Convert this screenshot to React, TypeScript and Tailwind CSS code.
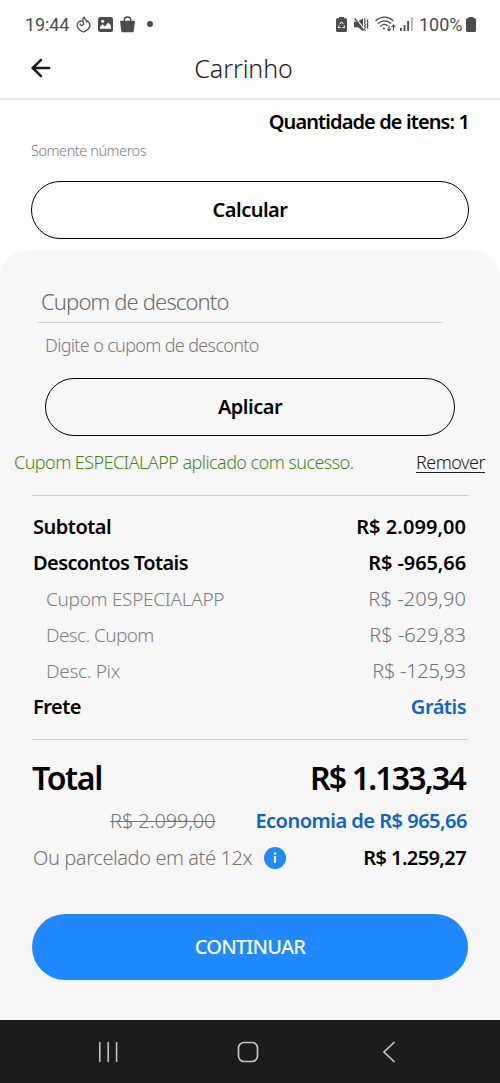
import { ArrowLeft } from 'lucide-react';

interface SummaryItem {
    label: string;
    value: string;
    labelClass: string;
    valueClass: string;
}

const strong = 'text-black font-semibold text-[20px]';
const light = 'text-[#808080] font-[350] text-[19px] pl-[13px]';
const lightValue = 'text-[#757575] font-[350] text-[20px]';

const summary: SummaryItem[] = [
    { label: 'Subtotal', value: 'R$ 2.099,00', labelClass: `${strong} tracking-[-0.5px]`, valueClass: `${strong} tracking-[0.05px]` },
    { label: 'Descontos Totais', value: 'R$ -965,66', labelClass: `${strong} tracking-[-0.6px]`, valueClass: `${strong} tracking-[-0.1px]` },
    { label: 'Cupom ESPECIALAPP', value: 'R$ -209,90', labelClass: `${light} tracking-[-0.3px]`, valueClass: `${lightValue} tracking-[0.1px]` },
    { label: 'Desc. Cupom', value: 'R$ -629,83', labelClass: `${light} tracking-[-0.6px]`, valueClass: `${lightValue} tracking-[0px]` },
    { label: 'Desc. Pix', value: 'R$ -125,93', labelClass: `${light} tracking-[-0.3px]`, valueClass: `${lightValue} tracking-[-0.3px]` },
    { label: 'Frete', value: 'Grátis', labelClass: `${strong} tracking-[-0.5px]`, valueClass: 'text-[#0e62d0] font-semibold text-[20px] tracking-[-0.5px]' },
];

function StatusBar() {
    return (
        <div className="flex h-10 items-center justify-between pt-2 pr-6 pl-[25px] font-['Roboto',sans-serif] text-[18px] text-[#4c4c4c]">
            <div className="flex items-center">
                <span className="w-[45px] whitespace-nowrap tracking-[-0.1px]">19:44</span>
                <svg className="ml-[6px]" width="15" height="17" viewBox="0 0 15 17" fill="none" stroke="#4c4c4c" strokeWidth="1.3" strokeLinecap="round" strokeLinejoin="round">
                    <path d="M6.9 4.4C6.4 2.8 7.2 1.7 8.2 1c-.1 1.4.9 2 1.7 3 .5.7.8 1.2.7 1.9l1.1-.9c1.500 1.300 2.300 3 2.200 4.600C13.700 12.800 10.500 14.700 7.500 16 4 14.700 1.100 12.400 1.100 9.300 1.100 6.500 3.400 4.800 5.700 5.200c2 .4 2.500 2.700 1.100 3.800-1.200.9-2.900.2-2.700-1.200" />
                </svg>
                <svg className="ml-[7px]" width="15" height="15" viewBox="0 0 15 15">
                    <rect width="15" height="15" rx="2.500" fill="#4c4c4c" />
                    <circle cx="4.600" cy="4.300" r="1.500" fill="white" />
                    <path d="M2 11.800V9.700l2.700-2.400 2.300 2.100 3.200-3.900L13 8.800v3H2z" fill="white" />
                </svg>
                <svg className="ml-[7px]" width="15" height="17" viewBox="0 0 15 17">
                    <path d="M4.300 6V3.600C4.300 2 5.700 1 7.500 1s3.200 1 3.200 2.600V6" fill="none" stroke="#4c4c4c" strokeWidth="1.500" />
                    <path d="M0 4.700h15l-1.200 10c-.1 1-.8 1.600-1.800 1.600H3c-1 0-1.700-.6-1.800-1.600z" fill="#4c4c4c" />
                </svg>
                <span className="ml-[12px] size-[6px] rounded-full bg-[#4c4c4c]" />
            </div>
            <div className="flex items-center">
                <svg width="11" height="15" viewBox="0 0 11 15">
                    <path d="M3 0h5v1.200h1.500C10.400 1.200 11 1.800 11 2.700v10.800c0 .9-.6 1.500-1.500 1.500h-8C.6 15 0 14.400 0 13.500V2.700c0-.9.6-1.500 1.500-1.500H3z" fill="#4c4c4c" />
                    <path d="M4 7 5.500 4.800 7.200 7M8 8.300l.7 2.300H6.300M4.700 10.600H2.300L3.100 8.300" fill="none" stroke="white" strokeWidth="1" />
                </svg>
                <svg className="ml-[7px]" width="15" height="15" viewBox="0 0 15 15" fill="#4c4c4c">
                    <path d="M0 4.800h4L9 1v13l-5-3.800H0z" />
                    <path d="M1.500.800 10.200 12" stroke="white" strokeWidth="1.300" />
                    <path d="m.600 1.500 9 11.800" stroke="#4c4c4c" strokeWidth="1.300" />
                    <path d="m11.300 1-.8 1.600.8 1.600-.8 1.600.8 1.600-.8 1.600.8 1.600-.8 1.600.8 1.600M14 2.200l-.8 1.600.8 1.600-.8 1.600.8 1.600-.8 1.600.8 1.600" fill="none" stroke="#4c4c4c" strokeWidth="1.100" />
                </svg>
                <svg className="ml-[6px]" width="21" height="16" viewBox="0 0 21 16" fill="none" stroke="#4c4c4c" strokeWidth="1.400" strokeLinecap="round">
                    <path d="M1 4.500C6 0 13 0 18 4.500M3.300 7.300c3.700-3.200 8.800-3.200 12.400-.1M5.800 10c2.200-1.900 4.600-1.900 6.200-.6" />
                    <circle cx="9" cy="12.400" r="1" fill="#4c4c4c" stroke="none" />
                    <path d="M14 9.800v5M12.400 13.200l1.600 1.600 1.600-1.600M18.400 14V9M16.800 10.600l1.600-1.600L20 10.600" strokeWidth="1.100" />
                </svg>
                <svg className="ml-[4px]" width="13" height="14" viewBox="0 0 13 14" fill="#4c4c4c">
                    <rect y="11" width="1.800" height="3" />
                    <rect x="3.600" y="8" width="1.800" height="6" />
                    <rect x="7.200" y="4" width="1.800" height="10" />
                    <rect x="11" width="1.800" height="14" opacity=".4" />
                </svg>
                <span className="ml-[6px] w-[45px] whitespace-nowrap">100%</span>
                <svg className="ml-[2px]" width="10" height="15" viewBox="0 0 10 15">
                    <path d="M2.500 0h5v1.200h1C9.400 1.200 10 1.800 10 2.700v10.800c0 .9-.6 1.500-1.500 1.500h-7C.6 15 0 14.400 0 13.500V2.700c0-.9.6-1.500 1.500-1.500h1z" fill="#4c4c4c" />
                </svg>
            </div>
        </div>
    );
}

function NavigationBar() {
    return (
        <div className="flex h-[63px] items-center bg-[#1c1c1c] pt-px pl-[98px]">
            <svg width="20" height="20" viewBox="0 0 20 20" stroke="#c4c4c4" strokeWidth="1.600">
                <path d="M1.800 0v20M10.200 0v20M18.600 0v20" />
            </svg>
            <svg className="ml-[119px]" width="22" height="22" viewBox="0 0 22 22" fill="none" stroke="#c4c4c4" strokeWidth="1.700">
                <rect x="1.500" y="1.500" width="19" height="19" rx="5.500" />
            </svg>
            <svg className="ml-[123px]" width="14" height="22" viewBox="0 0 14 22" fill="none" stroke="#c4c4c4" strokeWidth="1.700">
                <path d="M12.500 1 2 11l10.500 10" />
            </svg>
        </div>
    );
}

export default function App() {
    return (
        <div className="w-[500px] overflow-hidden bg-white font-['Noto_Sans',sans-serif] whitespace-nowrap text-black">
            <StatusBar />

            {/* Header */}
            <header className="grid h-[60px] grid-cols-[80px_1fr_80px] items-center border-b-2 border-[#e4e4e4]">
                <ArrowLeft className="ml-[27px] -mt-[3px] size-[28px] text-[#1c1c1c]" strokeWidth={2.2} />
                <h1 className="pr-[13px] text-center text-[25px] font-[350] tracking-[-0.1px] text-[#1a1a1a]">Carrinho</h1>
            </header>

            <section className="px-[31px]">
                <div className="flex h-[44px] items-center justify-end text-[20px] font-semibold tracking-[-0.9px]">
                    Quantidade de itens: 1
                </div>
                <p className="-mt-px text-[14.5px] leading-[14px] font-[350] tracking-[-0.45px] text-[#808080]">Somente números</p>
                <button className="mt-[24px] h-[58px] w-full rounded-full border-[1.5px] border-black text-[20px] font-semibold tracking-[-0.5px]">
                    Calcular
                </button>
            </section>

            {/* Coupon and order summary */}
            <section className="mt-[11px] h-[770px] rounded-t-[28px] bg-[#f7f7f7] pt-8">
                <div className="mr-[57px] ml-[37px] flex h-[41px] items-center border-b border-[#cfcfcf] pb-px pl-[4px] text-[22px] font-[350] tracking-[-0.85px] text-[#6b6b6b]">
                    Cupom de desconto
                </div>
                <p className="pl-[45px] text-[18px] leading-[44px] font-[350] tracking-[-0.65px] text-[#7b7b7b]">Digite o cupom de desconto</p>
                <div className="px-[45px] pt-[11px]">
                    <button className="h-[58px] w-full rounded-full border-[1.5px] border-black text-[20px] font-semibold tracking-[-0.5px]">
                        Aplicar
                    </button>
                </div>
                <div className="flex h-[54px] items-center justify-between pr-[15px] pb-px pl-[14px] text-[18px] font-[350]">
                    <span className="tracking-[-0.55px] text-[#468a1d]">Cupom ESPECIALAPP aplicado com sucesso.</span>
                    <a className="tracking-[-0.5px] text-[#1c1c1c] underline decoration-1 underline-offset-[3px]">Remover</a>
                </div>

                <div className="px-8 pt-[5px]">
                    <hr className="border-[#cfcfcf]" />
                    <div className="py-[13px] pr-[2px] pl-px">
                        {summary.map((item) => (
                            <div key={item.label} className="flex h-9 items-center justify-between">
                                <span className={item.labelClass}>{item.label}</span>
                                <span className={item.valueClass}>{item.value}</span>
                            </div>
                        ))}
                    </div>
                    <hr className="mt-px border-[#cfcfcf]" />

                    <div className="mt-4 flex h-[44px] items-center justify-between pr-[3px] text-[32px] font-semibold">
                        <span className="tracking-[-1.3px]">Total</span>
                        <span className="tracking-[-1.8px]">R$ 1.133,34</span>
                    </div>
                    <div className="mt-[3px] flex h-9 items-center justify-between pr-px pl-[78px] text-[20px]">
                        <span className="font-[350] tracking-[-0.1px] text-[#757575] line-through decoration-1">R$ 2.099,00</span>
                        <span className="font-semibold tracking-[-0.5px] text-[#0e62d0]">Economia de R$ 965,66</span>
                    </div>
                    <div className="flex h-[37px] items-center pr-[2px] pl-px text-[20px]">
                        <span className="w-[223px] font-[350] tracking-[-0.4px] text-[#757575]">Ou parcelado em até 12x</span>
                        <svg className="ml-[8px]" width="22" height="22" viewBox="0 0 22 22">
                            <circle cx="11" cy="11" r="11" fill="#2189ff" />
                            <path d="M9.900 5.500h2.200v2H9.900zM9.900 9h2.200v7H9.900z" fill="white" />
                        </svg>
                        <span className="ml-auto font-semibold tracking-[-0.6px]">R$ 1.259,27</span>
                    </div>

                    <button className="mt-[38px] h-[66px] w-full rounded-full bg-[#2189ff] text-[20px] font-medium tracking-[-0.8px] text-white">
                        CONTINUAR
                    </button>
                </div>
            </section>

            <NavigationBar />
        </div>
    );
}
